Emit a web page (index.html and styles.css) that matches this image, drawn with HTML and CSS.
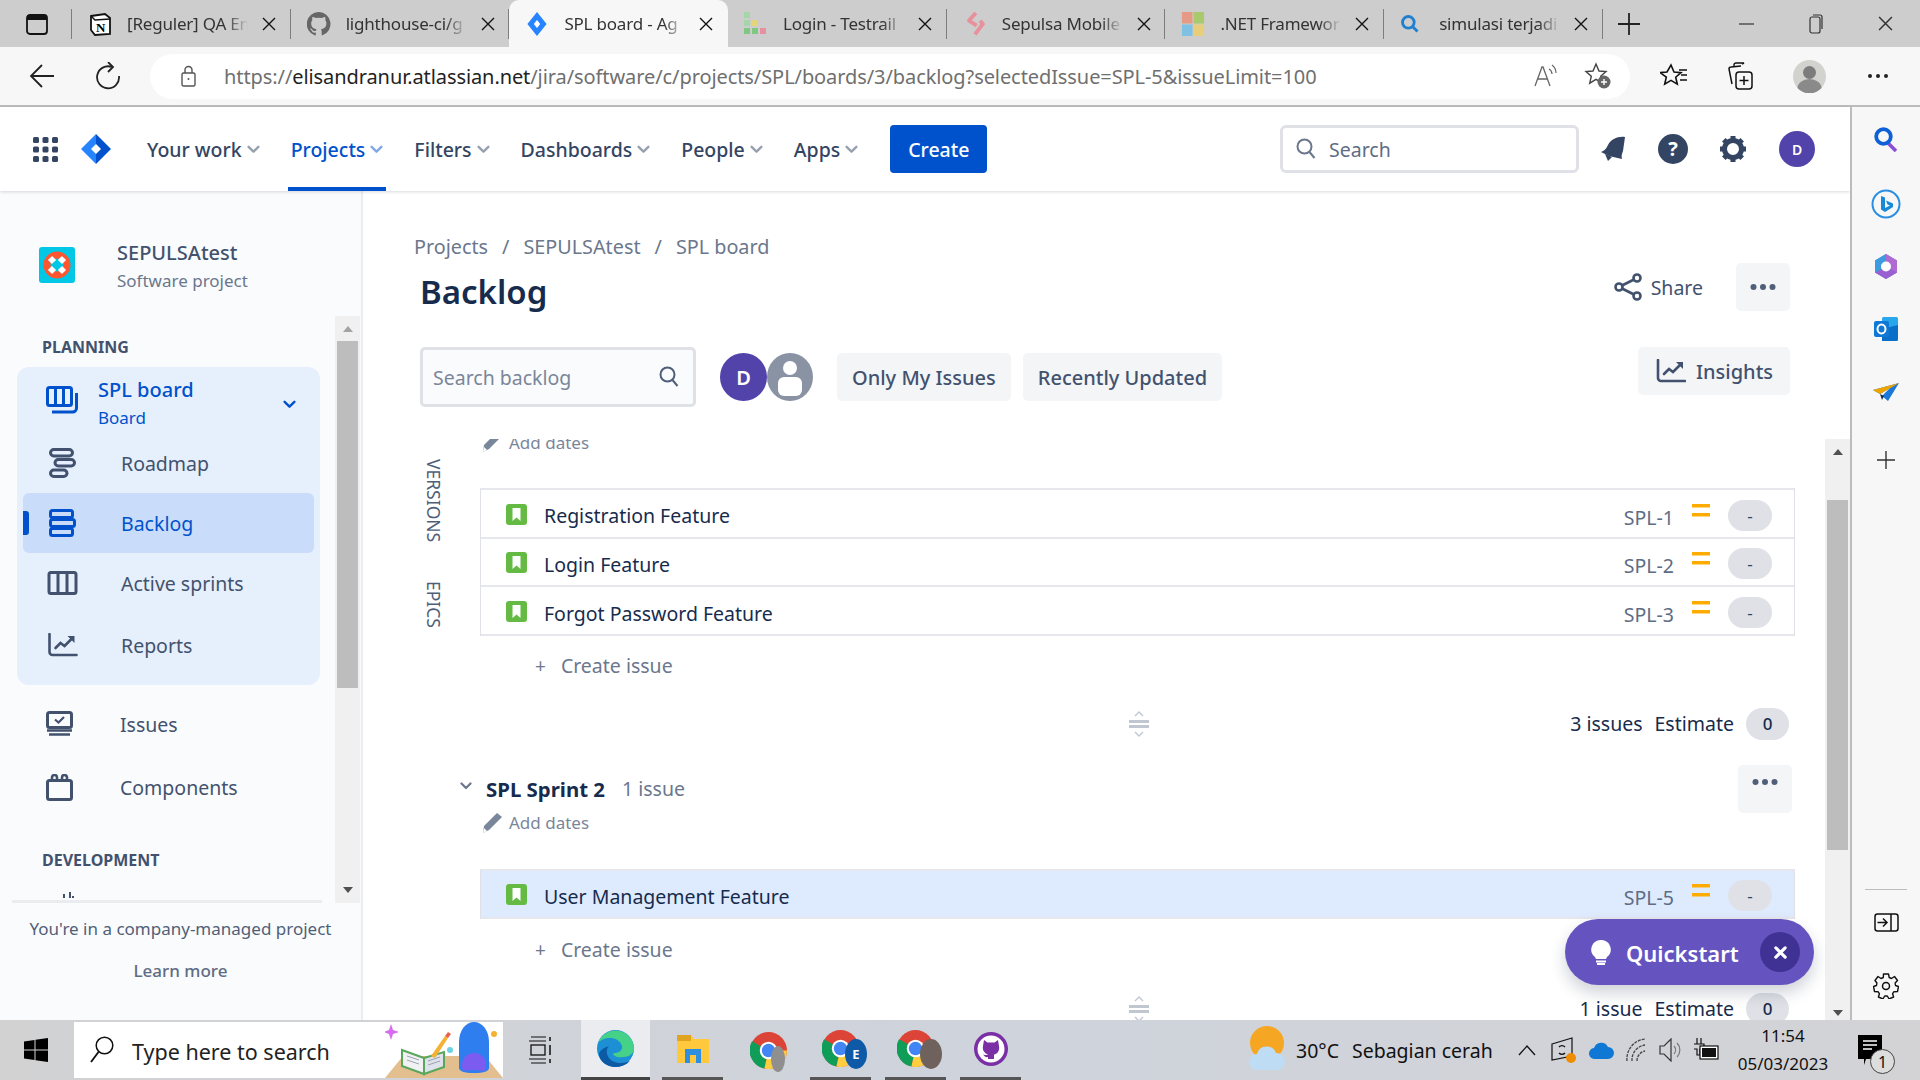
FILE: index.html
```html
<!DOCTYPE html>
<html lang="en">
<head>
    <meta charset="UTF-8">
    <title>Backlog - SPL board</title>
    <link rel="stylesheet" href="styles.css">
</head>
<body>
    <svg class="defs" width="0" height="0">
        <symbol id="x" viewBox="0 0 14 14"><path d="M1 1l12 12M13 1L1 13" stroke="currentColor" stroke-width="1.4" fill="none"/></symbol>
        <symbol id="chev" viewBox="0 0 12 8"><path d="M1.5 1.5L6 6l4.5-4.5" stroke="currentColor" stroke-width="2.2" fill="none" stroke-linecap="round" stroke-linejoin="round"/></symbol>
        <symbol id="story" viewBox="0 0 21 21"><rect width="21" height="21" rx="3" fill="#65ba43"/><path d="M6.5 4h8v13l-4-3.5-4 3.5z" fill="#fff"/></symbol>
        <symbol id="prio" viewBox="0 0 18 13"><path d="M0 0h18v3.4H0zM0 9h18v3.4H0z" fill="#ffab00"/></symbol>
        <symbol id="grip" viewBox="0 0 24 26"><path d="M8 5l4-4 4 4M8 21l4 4 4-4" stroke="#c1c7d0" stroke-width="1.4" fill="none"/><path d="M2 9h20v3H2zM2 14h20v3H2z" fill="#c1c7d0"/></symbol>
        <symbol id="pencil" viewBox="0 0 20 20"><path d="M15 0l5 4L7 17l-6 3 1-7z" fill="#7a869a"/><path d="M1 20l1-5 3 3z" fill="#fff"/></symbol>
        <symbol id="trend" viewBox="0 0 30 24"><path d="M2 1v18a3 3 0 0 0 3 3h24" stroke="currentColor" stroke-width="2.6" fill="none" stroke-linecap="round"/><path d="M8 15l5-5 4 3 7-7" stroke="currentColor" stroke-width="2.6" fill="none" stroke-linecap="round"/><path d="M20 3h7v7z" fill="currentColor"/></symbol>
        <symbol id="dots" viewBox="0 0 26 6"><circle cx="3.5" cy="3" r="3" fill="currentColor"/><circle cx="13" cy="3" r="3" fill="currentColor"/><circle cx="22.5" cy="3" r="3" fill="currentColor"/></symbol>
        <symbol id="chrome" viewBox="0 0 36 36"><circle cx="18" cy="18" r="18" fill="#db4437"/><path d="M18 18L2 9a18 18 0 0 0 12 26.600z" fill="#0f9d58"/><path d="M18 18h18a18 18 0 0 1-22 17.600z" fill="#ffcd40"/><circle cx="18" cy="18" r="8.500" fill="#fff"/><circle cx="18" cy="18" r="6.500" fill="#4285f4"/></symbol>
    </svg>

    <!-- Browser tabs -->
    <div class="tabstrip">
        <div class="tabstrip-start">
            <svg width="22" height="21" viewBox="0 0 22 21"><rect x="1" y="1" width="20" height="19" rx="3" fill="none" stroke="#111" stroke-width="1.800"/><rect x="1" y="1" width="20" height="5" fill="#111"/></svg>
        </div>
        <div class="tab">
            <svg class="favicon" viewBox="0 0 24 24"><path d="M3 4l14-2 5 4v16l-15 1-4-5z" fill="#fff" stroke="#111" stroke-width="1.800"/><path d="M3 4l4 4 15-1" fill="none" stroke="#111" stroke-width="1.500"/><text x="8" y="20" font-size="13" font-family="Liberation Serif" font-weight="700">N</text></svg>
            <span class="tab-title">[Reguler] QA En</span>
            <svg class="tab-x"><use href="#x"/></svg>
        </div>
        <div class="tab">
            <svg class="favicon" viewBox="0 0 24 24"><path d="M12 0a12 12 0 0 0-4 23.400c.6.100.8-.3.800-.6v-2.200c-3.300.7-4-1.500-4-1.500-.5-1.400-1.300-1.800-1.300-1.800-1.100-.7.100-.7.100-.7 1.200.1 1.800 1.200 1.800 1.200 1.100 1.800 2.800 1.300 3.500 1 .1-.8.400-1.300.8-1.600-2.700-.3-5.500-1.300-5.500-5.900 0-1.300.5-2.400 1.200-3.200-.1-.3-.5-1.500.1-3.200 0 0 1-.3 3.300 1.200a11.500 11.500 0 0 1 6 0c2.300-1.500 3.300-1.200 3.300-1.200.6 1.700.2 2.900.1 3.200.8.800 1.200 1.900 1.200 3.200 0 4.600-2.800 5.600-5.500 5.900.4.400.8 1.100.8 2.200v3.300c0 .3.200.7.800.6A12 12 0 0 0 12 0z" fill="#666"/></svg>
            <span class="tab-title">lighthouse-ci/g</span>
            <svg class="tab-x"><use href="#x"/></svg>
        </div>
        <div class="tab tab-active">
            <svg class="favicon" viewBox="0 0 24 30"><path d="M12 0l12 15-12 15L0 15z" fill="#2684ff"/><path d="M12 10l4 5-4 5-4-5z" fill="#fff"/></svg>
            <span class="tab-title">SPL board - Ag</span>
            <svg class="tab-x"><use href="#x"/></svg>
        </div>
        <div class="tab">
            <svg class="favicon" viewBox="0 0 24 24"><path d="M0 0h6v6H0zM0 8h6v6H0z" fill="#a5d6a7"/><path d="M0 16h6v6H0zM8 16h6v6H8z" fill="#81c784"/><path d="M8 8h6v6H8z" fill="#e6d47a"/><path d="M16 16h6v6h-6z" fill="#e88fa0"/></svg>
            <span class="tab-title">Login - Testrail</span>
            <svg class="tab-x"><use href="#x"/></svg>
        </div>
        <div class="tab">
            <svg class="favicon" viewBox="0 0 24 28"><path d="M13 1L5 10l9 6" fill="none" stroke="#e8919d" stroke-width="4.500" stroke-linejoin="round"/><path d="M18 10l3 4-9 12" fill="none" stroke="#e8919d" stroke-width="4.500"/></svg>
            <span class="tab-title">Sepulsa Mobile</span>
            <svg class="tab-x"><use href="#x"/></svg>
        </div>
        <div class="tab">
            <svg class="favicon" viewBox="0 0 24 26"><path d="M0 0h11.500v12.500H0z" fill="#e59a85"/><path d="M12.500 0H24v12.500H12.500z" fill="#a9c96f"/><path d="M0 13.500h11.500V26H0z" fill="#7fc1e3"/><path d="M12.500 13.500H24V26H12.500z" fill="#e8cd7a"/></svg>
            <span class="tab-title">.NET Framewor</span>
            <svg class="tab-x"><use href="#x"/></svg>
        </div>
        <div class="tab">
            <svg class="favicon favicon-small" viewBox="0 0 24 24"><circle cx="10" cy="10" r="7" fill="none" stroke="#1f7fd1" stroke-width="3.400"/><path d="M15 15l6 6" stroke="#1f7fd1" stroke-width="3.400"/></svg>
            <span class="tab-title">simulasi terjadi</span>
            <svg class="tab-x"><use href="#x"/></svg>
        </div>
        <svg class="tab-new" width="22" height="22" viewBox="0 0 22 22"><path d="M11 0v22M0 11h22" stroke="#222" stroke-width="1.800"/></svg>
        <div class="win-controls">
            <svg width="15" height="15" viewBox="0 0 15 15"><path d="M0 8h15" stroke="#333" stroke-width="1.200"/></svg>
            <svg width="14" height="20" viewBox="0 0 14 20"><rect x="1" y="3" width="10" height="16" rx="2" fill="none" stroke="#333" stroke-width="1.200"/><path d="M4 1h7a2 2 0 0 1 2 2v12" fill="none" stroke="#333" stroke-width="1.200"/></svg>
            <svg width="15" height="15"><use href="#x"/></svg>
        </div>
    </div>

    <!-- Browser toolbar -->
    <div class="toolbar">
        <svg class="tb-back" width="25" height="26" viewBox="0 0 25 26"><path d="M25 13H2M13 2L2 13l11 11" fill="none" stroke="#222" stroke-width="1.800"/></svg>
        <svg class="tb-reload" width="25" height="28" viewBox="0 0 25 28"><path d="M17 5a11 11 0 1 0 7 9" fill="none" stroke="#222" stroke-width="1.800"/><path d="M13 0l5 5-5 5" fill="none" stroke="#222" stroke-width="1.800"/></svg>
        <div class="addressbar">
            <svg width="15" height="22" viewBox="0 0 15 22"><rect x="1" y="8" width="13" height="13" rx="1.500" fill="none" stroke="#555" stroke-width="1.400"/><path d="M4 8V5a3.500 3.500 0 0 1 7 0v3" fill="none" stroke="#555" stroke-width="1.400"/><circle cx="7.500" cy="14" r="1" fill="#555"/></svg>
            <div class="url"><span class="url-dim">https://</span>elisandranur.atlassian.net<span class="url-dim">/jira/software/c/projects/SPL/boards/3/backlog?selectedIssue=SPL-5&amp;issueLimit=100</span></div>
            <svg class="addr-read" width="24" height="24" viewBox="0 0 24 24"><path d="M1 22L8 3h1l7 19M4 15h10" fill="none" stroke="#666" stroke-width="1.300"/><path d="M15 5a6 6 0 0 1 3 5M18 1a10 10 0 0 1 4 8" fill="none" stroke="#666" stroke-width="1.200"/></svg>
            <svg class="addr-fav" width="28" height="28" viewBox="0 0 28 28"><path d="M12 2l3 7 7 .6-5.300 4.600 1.600 7-6.300-3.800-6.300 3.800 1.600-7L2 9.600 9 9z" fill="none" stroke="#444" stroke-width="1.400"/><circle cx="20" cy="20" r="6.500" fill="#666"/><path d="M20 17v6M17 20h6" stroke="#fff" stroke-width="1.400"/></svg>
        </div>
        <svg class="tb-favs" width="28" height="26" viewBox="0 0 28 26"><path d="M11 2l3 7 7 .6-5.300 4.600 1.600 7-6.300-3.800-6.300 3.800 1.600-7L0 9.600 7 9z" fill="none" stroke="#111" stroke-width="1.600"/><path d="M19 7h8M21 12h6M20 17h7" stroke="#111" stroke-width="1.500"/></svg>
        <svg class="tb-coll" width="25" height="28" viewBox="0 0 25 28"><path d="M6 4V3a2 2 0 0 1 2-2h8l-2 1" fill="none" stroke="#111" stroke-width="1.400"/><path d="M4 22l-3-15a2 2 0 0 1 2-2l10-1" fill="none" stroke="#111" stroke-width="1.500"/><rect x="8" y="10" width="16" height="17" rx="3" fill="none" stroke="#111" stroke-width="1.500"/><path d="M16 14v9M11.500 18.500h9" stroke="#111" stroke-width="1.500"/></svg>
        <div class="tb-profile">
            <svg width="33" height="33" viewBox="0 0 33 33"><circle cx="16.500" cy="16.500" r="16.500" fill="#d2d2cf"/><circle cx="16.500" cy="12.500" r="6.500" fill="#7c7c7c"/><path d="M4.500 28a12 9 0 0 1 24 0 16 16 0 0 1-24 0z" fill="#8a8a8a"/></svg>
        </div>
        <svg class="tb-more" width="22" height="6" viewBox="0 0 22 6"><circle cx="3" cy="3" r="2" fill="#222"/><circle cx="11" cy="3" r="2" fill="#222"/><circle cx="19" cy="3" r="2" fill="#222"/></svg>
    </div>

    <div class="page">
        <div class="main">
            <!-- Jira top navigation -->
            <header class="topnav">
                <svg class="apps" width="25" height="25" viewBox="0 0 25 25" fill="#344563">
                    <rect width="6" height="6" rx="1.500"/><rect x="9.500" width="6" height="6" rx="1.500"/><rect x="19" width="6" height="6" rx="1.500"/>
                    <rect y="9.500" width="6" height="6" rx="1.500"/><rect x="9.500" y="9.500" width="6" height="6" rx="1.500"/><rect x="19" y="9.500" width="6" height="6" rx="1.500"/>
                    <rect y="19" width="6" height="6" rx="1.500"/><rect x="9.500" y="19" width="6" height="6" rx="1.500"/><rect x="19" y="19" width="6" height="6" rx="1.500"/>
                </svg>
                <svg class="logo" width="30" height="30" viewBox="0 0 30 30"><path d="M15 0l15 15-15 15z" fill="#0052cc"/><path d="M15 0L0 15l15 15z" fill="#2684ff"/><path d="M15 10l5 5-5 5-5-5z" fill="#fff"/></svg>
                <nav class="nav-items">
                    <a class="nav-item">Your work<svg class="nav-chev"><use href="#chev"/></svg></a>
                    <a class="nav-item nav-current">Projects<svg class="nav-chev"><use href="#chev"/></svg></a>
                    <a class="nav-item">Filters<svg class="nav-chev"><use href="#chev"/></svg></a>
                    <a class="nav-item">Dashboards<svg class="nav-chev"><use href="#chev"/></svg></a>
                    <a class="nav-item">People<svg class="nav-chev"><use href="#chev"/></svg></a>
                    <a class="nav-item">Apps<svg class="nav-chev"><use href="#chev"/></svg></a>
                </nav>
                <button class="create-btn">Create</button>
                <div class="nav-search">
                    <svg width="20" height="22" viewBox="0 0 20 22"><circle cx="8.500" cy="8.500" r="7" fill="none" stroke="#6b778c" stroke-width="2"/><path d="M13.500 14l5 6" stroke="#6b778c" stroke-width="2"/></svg>
                    <span>Search</span>
                </div>
                <svg class="nav-bell" width="28" height="26" viewBox="0 0 28 26"><path d="M9 9C12 3 19 0 26 1l-2 14c-1 3-2 5-1 8l-13-3-8-4c3-1 5-3 7-7z" fill="#344563"/><path d="M6 18l3 7 4-4z" fill="#344563"/></svg>
                <svg class="nav-help" width="30" height="30" viewBox="0 0 30 30"><circle cx="15" cy="15" r="15" fill="#344563"/><text x="15" y="22" text-anchor="middle" font-size="20" font-weight="700" fill="#fff" font-family="Noto Sans">?</text></svg>
                <svg class="nav-gear" width="28" height="28" viewBox="0 0 28 28"><circle cx="14" cy="14" r="8.500" fill="none" stroke="#344563" stroke-width="5"/><path d="M14 1v6M14 21v6M1 14h6M21 14h6M4.800 4.800l4.200 4.200M19 19l4.200 4.200M23.200 4.800L19 9M9 19l-4.200 4.200" stroke="#344563" stroke-width="5"/></svg>
                <div class="avatar avatar-nav">D</div>
            </header>

            <div class="body">
                <!-- Project sidebar -->
                <aside class="sidebar">
                    <div class="project">
                        <svg width="36" height="36" viewBox="0 0 36 36"><rect width="36" height="36" rx="3" fill="#00c7e6"/><circle cx="18" cy="18" r="10" fill="none" stroke="#ff5630" stroke-width="7"/><path d="M11 11l4 4M25 11l-4 4M11 25l4-4M25 25l-4-4" stroke="#fff" stroke-width="6"/></svg>
                        <div class="project-text">
                            <div class="project-name">SEPULSAtest</div>
                            <div class="project-type">Software project</div>
                        </div>
                    </div>
                    <div class="side-scroll">
                        <div class="side-nav">
                            <div class="side-heading">PLANNING</div>
                            <div class="panel">
                                <div class="board-row">
                                    <svg width="32" height="28" viewBox="0 0 32 28"><rect x="1.500" y="1.500" width="24" height="18" rx="2" fill="none" stroke="#0052cc" stroke-width="3"/><path d="M9.500 2v17M17.500 2v17" stroke="#0052cc" stroke-width="3"/><path d="M30.500 7v15a4 4 0 0 1-4 4H6" fill="none" stroke="#0052cc" stroke-width="3"/></svg>
                                    <div class="board-text">
                                        <div class="board-name">SPL board</div>
                                        <div class="board-type">Board</div>
                                    </div>
                                    <svg class="board-chev"><use href="#chev"/></svg>
                                </div>
                                <div class="side-item">
                                    <svg width="27" height="30" viewBox="0 0 27 30"><g fill="none" stroke="#42526e" stroke-width="3"><rect x="1.500" y="1.500" width="22" height="6.500" rx="3.250"/><rect x="6" y="11.500" width="19.500" height="6.500" rx="3.250"/><rect x="1.500" y="22" width="16.500" height="6.500" rx="3.250"/></g></svg>
                                    <span>Roadmap</span>
                                </div>
                                <div class="side-item side-current">
                                    <svg width="27" height="28" viewBox="0 0 27 28"><g fill="none" stroke="#0052cc" stroke-width="3"><rect x="1.500" y="1.500" width="22" height="7" rx="2"/><rect x="1.500" y="10.500" width="24" height="7" rx="2"/><rect x="1.500" y="19.500" width="22" height="7" rx="2"/></g></svg>
                                    <span>Backlog</span>
                                </div>
                                <div class="side-item">
                                    <svg width="30" height="24" viewBox="0 0 30 24"><rect x="1.500" y="1.500" width="27" height="21" rx="2" fill="none" stroke="#42526e" stroke-width="3"/><path d="M10.500 2v20M19.500 2v20" stroke="#42526e" stroke-width="3"/></svg>
                                    <span>Active sprints</span>
                                </div>
                                <div class="side-item side-reports">
                                    <svg class="ic-trend"><use href="#trend"/></svg>
                                    <span>Reports</span>
                                </div>
                            </div>
                            <div class="side-item side-plain">
                                <svg width="27" height="27" viewBox="0 0 27 27"><rect x="1.500" y="1.500" width="24" height="15" rx="2" fill="none" stroke="#42526e" stroke-width="3"/><path d="M9 8.500l3.500 3L18 6" fill="none" stroke="#42526e" stroke-width="2.200"/><path d="M1 19.500h25M3 23.500h21" stroke="#42526e" stroke-width="2.600"/></svg>
                                <span>Issues</span>
                            </div>
                            <div class="side-item side-plain">
                                <svg width="27" height="27" viewBox="0 0 27 27"><rect x="1.500" y="6.500" width="24" height="19" rx="2" fill="none" stroke="#42526e" stroke-width="3"/><path d="M6 7V3.500a2 2 0 0 1 5 0V7M16 7V3.500a2 2 0 0 1 5 0V7" fill="none" stroke="#42526e" stroke-width="2.600"/></svg>
                                <span>Components</span>
                            </div>
                            <div class="side-heading side-heading-dev">DEVELOPMENT</div>
                            <svg class="side-clip" width="16" height="6" viewBox="0 0 16 6"><path d="M2 2v4M8 0v6M11 4v2" stroke="#42526e" stroke-width="2"/></svg>
                        </div>
                        <div class="scrollbar scrollbar-side">
                            <i class="arrow-up"></i>
                            <div class="thumb thumb-side"></div>
                            <i class="arrow-down"></i>
                        </div>
                    </div>
                    <div class="side-foot">
                        <div>You're in a company-managed project</div>
                        <div class="learn-more">Learn more</div>
                    </div>
                </aside>

                <!-- Backlog -->
                <main class="content">
                    <div class="crumbs">
                        <span>Projects</span><i>/</i><span>SEPULSAtest</span><i>/</i><span>SPL board</span>
                    </div>
                    <div class="title-row">
                        <h1>Backlog</h1>
                        <div class="share">
                            <svg width="28" height="28" viewBox="0 0 28 28"><g fill="none" stroke="#42526e" stroke-width="2.600"><circle cx="5" cy="14" r="3.500"/><circle cx="23" cy="5" r="3.500"/><circle cx="23" cy="23" r="3.500"/><path d="M8 12.500L20 6.500M8 15.500l12 6"/></g></svg>
                            <span>Share</span>
                        </div>
                        <button class="grey-btn more-btn"><svg class="ic-dots"><use href="#dots"/></svg></button>
                    </div>
                    <div class="filter-row">
                        <div class="backlog-search">
                            <span>Search backlog</span>
                            <svg width="20" height="22" viewBox="0 0 20 22"><circle cx="8.500" cy="8.500" r="7" fill="none" stroke="#505f79" stroke-width="2"/><path d="M13.500 14l5 6" stroke="#505f79" stroke-width="2"/></svg>
                        </div>
                        <div class="avatars">
                            <div class="avatar avatar-d">D</div>
                            <svg width="46" height="48" viewBox="0 0 46 48"><ellipse cx="23" cy="24" rx="23" ry="24" fill="#8993a4"/><circle cx="23" cy="15" r="7" fill="#fff"/><rect x="11" y="24" width="24" height="19" rx="6" fill="#fff"/></svg>
                        </div>
                        <button class="grey-btn filter-btn">Only My Issues</button>
                        <button class="grey-btn filter-btn">Recently Updated</button>
                        <button class="grey-btn insights-btn"><svg class="ic-trend"><use href="#trend"/></svg>Insights</button>
                    </div>
                    <div class="backlog-body">
                        <div class="side-tabs">
                            <span>VERSIONS</span>
                            <span>EPICS</span>
                        </div>
                        <div class="backlog">
                            <section class="sprint sprint-scrolled">
                                <div class="add-dates"><svg class="ic-pencil"><use href="#pencil"/></svg>Add dates</div>
                                <div class="issues">
                                    <div class="issue">
                                        <svg class="ic-story"><use href="#story"/></svg>
                                        <span class="issue-name">Registration Feature</span>
                                        <span class="issue-key">SPL-1</span>
                                        <svg class="ic-prio"><use href="#prio"/></svg>
                                        <span class="pill pill-est">-</span>
                                    </div>
                                    <div class="issue">
                                        <svg class="ic-story"><use href="#story"/></svg>
                                        <span class="issue-name">Login Feature</span>
                                        <span class="issue-key">SPL-2</span>
                                        <svg class="ic-prio"><use href="#prio"/></svg>
                                        <span class="pill pill-est">-</span>
                                    </div>
                                    <div class="issue">
                                        <svg class="ic-story"><use href="#story"/></svg>
                                        <span class="issue-name">Forgot Password Feature</span>
                                        <span class="issue-key">SPL-3</span>
                                        <svg class="ic-prio"><use href="#prio"/></svg>
                                        <span class="pill pill-est">-</span>
                                    </div>
                                </div>
                                <div class="create-issue"><b>+</b>Create issue</div>
                                <div class="sprint-foot">
                                    <svg class="ic-grip"><use href="#grip"/></svg>
                                    <span class="foot-count">3 issues</span>
                                    <span>Estimate</span>
                                    <span class="pill pill-total">0</span>
                                </div>
                            </section>
                            <section class="sprint">
                                <div class="sprint-head">
                                    <svg class="sprint-chev"><use href="#chev"/></svg>
                                    <h2>SPL Sprint 2</h2>
                                    <span class="sprint-count">1 issue</span>
                                    <button class="grey-btn sprint-more"><svg class="ic-dots"><use href="#dots"/></svg></button>
                                </div>
                                <div class="add-dates add-dates-2"><svg class="ic-pencil"><use href="#pencil"/></svg>Add dates</div>
                                <div class="issues">
                                    <div class="issue issue-selected">
                                        <svg class="ic-story"><use href="#story"/></svg>
                                        <span class="issue-name">User Management Feature</span>
                                        <span class="issue-key">SPL-5</span>
                                        <svg class="ic-prio"><use href="#prio"/></svg>
                                        <span class="pill pill-est">-</span>
                                    </div>
                                </div>
                                <div class="create-issue create-issue-2"><b>+</b>Create issue</div>
                                <div class="sprint-foot sprint-foot-2">
                                    <svg class="ic-grip"><use href="#grip"/></svg>
                                    <span class="foot-count">1 issue</span>
                                    <span>Estimate</span>
                                    <span class="pill pill-total">0</span>
                                </div>
                            </section>
                        </div>
                        <div class="scrollbar scrollbar-main">
                            <i class="arrow-up"></i>
                            <div class="thumb thumb-main"></div>
                            <i class="arrow-down"></i>
                        </div>
                    </div>
                </main>
            </div>
        </div>

        <!-- Edge sidebar -->
        <div class="edge-bar">
            <svg class="edge-search" width="24" height="25" viewBox="0 0 24 25"><path d="M14 16l8 8" stroke="#8a4fd3" stroke-width="3.600"/><circle cx="9.500" cy="9.500" r="7.300" fill="none" stroke="#0f5fd7" stroke-width="3.800"/></svg>
            <svg class="edge-bing" width="30" height="30" viewBox="0 0 30 30"><circle cx="15" cy="15" r="13.500" fill="none" stroke="#2a8fe0" stroke-width="2"/><path d="M10 7l4 1.500V19l5-2.500-2.500-1-1.500-4 7 3v3.500L14 23l-4-2.500z" fill="#1689d8"/></svg>
            <svg class="edge-m365" width="26" height="27" viewBox="0 0 26 27"><path d="M13 1l11 6.500v12L13 26 2 19.500v-12z" fill="#6f6fd8"/><path d="M13 1l11 6.500v12L13 14z" fill="#b06bd3"/><path d="M2 19.500L13 14l11 5.500L13 26z" fill="#9a5fd0"/><path d="M2 7.500L13 1v13L2 19.500z" fill="#3e9be0"/><circle cx="13" cy="13.500" r="5" fill="#fff"/></svg>
            <svg class="edge-outlook" width="25" height="24" viewBox="0 0 25 24"><rect x="8" y="0" width="16" height="24" rx="1.500" fill="#28a8ea"/><path d="M8 12l16-4v14a2 2 0 0 1-2 2H8z" fill="#0a6fc9"/><rect y="4" width="15" height="16" rx="2" fill="#0f78d4"/><ellipse cx="7.500" cy="12" rx="4" ry="4.500" fill="none" stroke="#fff" stroke-width="2"/></svg>
            <svg class="edge-send" width="26" height="18" viewBox="0 0 26 18"><path d="M26 0L0 7l7 4 10-6-8 8 6 5z" fill="#1a78d8"/><path d="M26 0L0 7l7 4z" fill="#f0a400"/><path d="M7 11l2 6 2-4z" fill="#1a2a55"/></svg>
            <svg class="edge-plus" width="18" height="18" viewBox="0 0 18 18"><path d="M9 0v18M0 9h18" stroke="#333" stroke-width="1.400"/></svg>
            <div class="edge-line"></div>
            <svg class="edge-collapse" width="25" height="19" viewBox="0 0 25 19"><rect x="1" y="1" width="23" height="17" rx="2.500" fill="none" stroke="#111" stroke-width="1.500"/><path d="M17 1v17M3.500 9.500h9M9 5.500l4 4-4 4" fill="none" stroke="#111" stroke-width="1.500"/></svg>
            <svg class="edge-gear" width="26" height="26" viewBox="0 0 26 26"><circle cx="13" cy="13" r="3.500" fill="none" stroke="#111" stroke-width="1.500"/><path d="M10.500 1h5l.7 3.500 2.300 1 3-2 3 4-2.400 2.500.4 2.500 3 1-1 5-3.500.2-1.400 2 1 3.300-4.500 2-1.800-3h-2.600l-1.800 3-4.500-2 1-3.300-1.400-2-3.500-.2-1-5 3-1 .4-2.500L2 7.500l3-4 3 2 2.300-1z" fill="none" stroke="#111" stroke-width="1.400" stroke-linejoin="round"/></svg>
        </div>

        <div class="quickstart">
            <svg width="20" height="25" viewBox="0 0 20 25"><path d="M10 0a9.500 9.500 0 0 1 6 17l-1 2H5l-1-2A9.500 9.500 0 0 1 10 0z" fill="#fff"/><path d="M5 21.500h10M6 24h8" stroke="#fff" stroke-width="2"/></svg>
            <span>Quickstart</span>
            <div class="quick-close"><svg width="13" height="13" viewBox="0 0 14 14"><path d="M2 2l10 10M12 2L2 12" stroke="#fff" stroke-width="3.400" stroke-linecap="round"/></svg></div>
        </div>
    </div>

    <!-- Windows taskbar -->
    <div class="taskbar">
        <svg class="start" width="24" height="24" viewBox="0 0 24 24" fill="#000"><path d="M0 3.500L10.500 2v9.500H0zM11.500 1.800L24 0v11.500H11.500zM0 12.500h10.500V22L0 20.500zM11.500 12.500H24V24l-12.500-1.800z"/></svg>
        <div class="task-search">
            <svg width="24" height="28" viewBox="0 0 24 28"><circle cx="14.500" cy="9.500" r="8.300" fill="none" stroke="#111" stroke-width="1.500"/><path d="M8.500 16L1 26" stroke="#111" stroke-width="1.800"/></svg>
            <span>Type here to search</span>
            <svg class="search-art" width="118" height="58" viewBox="0 0 118 58"><path d="M0 58l18-22h82l18 22z" fill="#e3bf8f"/><path d="M17 30l22 8v16l-22-8z" fill="#f1f1f4" stroke="#58a75a" stroke-width="2"/><path d="M39 38l20-6v15l-20 7z" fill="#dfe2ec" stroke="#58a75a" stroke-width="2"/><path d="M22 36l12 4M22 40l12 4M43 41l12-4M43 45l12-4" stroke="#9aa3b2" stroke-width="1"/><path d="M46 36l14-20 3 2-13 20z" fill="#f5b132"/><path d="M60 16l3-4 3 2-3 4z" fill="#e8604c"/><path d="M6 4l2 6 6 2-6 2-2 6-2-6-5-2 5-2z" fill="#d66df0"/><circle cx="65" cy="30" r="3" fill="#6bd2e6"/><path d="M74 48V22c0-12 7-20 15-20s15 8 15 20v26c0 3-5 5-15 5s-15-2-15-5z" fill="#2e7ef0"/><path d="M77 46c0-8 5-13 12-13s12 5 12 13-5 4-12 4-12 3-12-4z" fill="#7c5cf0"/><circle cx="109" cy="14" r="3" fill="#f5b132"/></svg>
        </div>
        <svg class="task-view" width="24" height="28" viewBox="0 0 24 28"><path d="M3 1h15M1 5h17M3 27h15M1 23h17" fill="none" stroke="#111" stroke-width="1.200"/><rect x="3" y="9" width="14" height="10" fill="none" stroke="#111" stroke-width="1.300"/><path d="M22 1v4M22 9v10M22 23v4" stroke="#111" stroke-width="1.500"/></svg>
        <div class="task-app task-edge">
            <svg width="37" height="37" viewBox="0 0 37 37"><circle cx="18.500" cy="18.500" r="18.500" fill="#1d8fd4"/><path d="M37 18.500a18.500 18.500 0 0 0-36-5.500c5-6 20-8 24 3 1 4-3 7-7 7-3 0-2 3 2 4 8 1 17-1 17-8.500z" fill="#46d189"/><path d="M2 24c0 7 8 13 16 13 6 0 11-2 15-6-6 3-17 3-21-3-3-4-3-9 0-12C7 18 3 20 2 24z" fill="#0c59a4"/></svg>
        </div>
        <div class="task-app task-open task-files">
            <svg width="32" height="36" viewBox="0 0 32 36"><path d="M0 4h14l3 4h15v24H0z" fill="#ffc83d"/><path d="M0 4h14v6H0z" fill="#e0a422"/><path d="M8 18h16v14h-5v-8h-6v8H8z" fill="#2e8fe0"/></svg>
        </div>
        <div class="task-app task-chrome1">
            <svg width="37" height="37"><use href="#chrome"/></svg>
            <i class="chrome-badge badge-grey"></i>
        </div>
        <div class="task-app task-open task-chrome2">
            <svg width="37" height="37"><use href="#chrome"/></svg>
            <i class="chrome-badge badge-blue">E</i>
        </div>
        <div class="task-app task-open task-chrome3">
            <svg width="37" height="37"><use href="#chrome"/></svg>
            <i class="chrome-badge badge-photo"></i>
        </div>
        <div class="task-app task-open task-gh">
            <svg width="34" height="34" viewBox="0 0 34 34"><circle cx="17" cy="17" r="17" fill="#7b2fa5"/><circle cx="17" cy="17" r="13.500" fill="#fff"/><path d="M10 8l3.500 2.500h7L24 8l1 6c1 5-2 8-5 8.500V27h-6v-2c-2 .5-4-.5-5-3 1 1 3 1.500 5 .5-3-1-6-4-5-8.500z" fill="#7b2fa5"/></svg>
        </div>
        <div class="tray">
            <svg class="tray-weather" width="36" height="48" viewBox="0 0 36 48"><circle cx="18" cy="17" r="17" fill="#f5a623"/><path d="M8 44a8 8 0 0 1 0-16 10 10 0 0 1 19-1 8.500 8.500 0 0 1 1 17z" fill="#bfdcf5"/></svg>
            <div class="weather-text"><span>30°C</span><span>Sebagian cerah</span></div>
            <svg class="tray-caret" width="18" height="11" viewBox="0 0 18 11"><path d="M1 10l8-9 8 9" fill="none" stroke="#111" stroke-width="1.300"/></svg>
            <svg class="tray-ic" width="26" height="28" viewBox="0 0 26 28"><path d="M1 8l20-6v18l-20 4z" fill="none" stroke="#111" stroke-width="1.200"/><path d="M8 11a4 4 0 0 1 6 0M14 17a4 4 0 0 1-6 0" fill="none" stroke="#111" stroke-width="1.300"/><circle cx="20" cy="22" r="5" fill="#f08c00"/></svg>
            <svg class="tray-ic" width="25" height="18" viewBox="0 0 25 18"><path d="M6 18a5.500 5.500 0 0 1-1-11 7.500 7.500 0 0 1 14-1 6 6 0 0 1 0 12z" fill="#0f78d4"/></svg>
            <svg class="tray-ic" width="21" height="24" viewBox="0 0 21 24"><path d="M1 23a20 20 0 0 1 18-22M6 23a15 15 0 0 1 13-16M11 23a10 10 0 0 1 8-10" fill="none" stroke="#444" stroke-width="1.300" stroke-dasharray="3 1"/></svg>
            <svg class="tray-ic" width="22" height="24" viewBox="0 0 22 24"><path d="M1 8h4l7-7v22l-7-7H1z" fill="none" stroke="#333" stroke-width="1.200"/><path d="M15 8a6 6 0 0 1 0 8M18 5a10 10 0 0 1 0 14" fill="none" stroke="#777" stroke-width="1.200"/></svg>
            <svg class="tray-ic" width="26" height="24" viewBox="0 0 26 24"><path d="M4 0v6M8 0v6M1 6h10v5H7v6H4v-6H1" fill="none" stroke="#111" stroke-width="1.200"/><rect x="7" y="8" width="18" height="13" fill="#fff" stroke="#111" stroke-width="1.200"/><rect x="9" y="10" width="14" height="9" fill="#111"/></svg>
            <div class="clock"><div>11:54</div><div>05/03/2023</div></div>
            <div class="notif">
                <svg width="24" height="30" viewBox="0 0 24 30"><path d="M0 0h24v24H8l-2 6v-6H0z" fill="#000"/><path d="M5 6h14M5 10h14M5 14h9" stroke="#fff" stroke-width="1.500"/></svg>
                <span class="notif-badge">1</span>
            </div>
        </div>
    </div>
</body>
</html>
```

FILE: styles.css
```css
* {
    box-sizing: border-box;
}

html, body {
    margin: 0;
    padding: 0;
    height: 1080px;
    overflow: hidden;
}

body {
    font-family: "Noto Sans", "Open Sans", sans-serif;
    font-size: 19.5px;
    color: #172b4d;
    background: #fff;
    display: flex;
    flex-direction: column;
}

button {
    font-family: inherit;
    border: none;
    cursor: pointer;
}

svg {
    flex-shrink: 0;
    display: block;
}

.defs {
    position: absolute;
}

/* Browser tabs */
.tabstrip {
    height: 47px;
    background: #cdcdcd;
    display: flex;
    align-items: center;
    flex-shrink: 0;
}

.tabstrip-start {
    width: 72px;
    height: 30px;
    padding: 5px 0 0 26px;
    border-right: 1px solid #7d7d7d;
}

.tab {
    width: 218.7px;
    height: 30px;
    padding-left: 16px;
    display: flex;
    align-items: center;
    border-right: 1px solid #7d7d7d;
    flex-shrink: 0;
    position: relative;
}

.tab-active {
    height: 47px;
    align-self: flex-start;
    background: #f7f7f7;
    border-right: none;
    border-radius: 10px 10px 0 0;
}

.favicon {
    width: 24px;
    height: 24px;
}

.favicon-small {
    width: 20px;
    height: 20px;
    margin-right: 4px;
}

.tab-title {
    width: 121px;
    margin-left: 15px;
    font-size: 17px;
    letter-spacing: -0.2px;
    white-space: nowrap;
    overflow: hidden;
    color: #333;
    -webkit-mask-image: linear-gradient(to right, #000 82%, transparent);
    mask-image: linear-gradient(to right, #000 82%, transparent);
}

.tab-x {
    width: 14px;
    height: 14px;
    margin-left: 14px;
    color: #111;
}

.tab-new {
    margin-left: 15px;
}

.win-controls {
    margin-left: auto;
    padding-right: 27px;
    display: flex;
    align-items: center;
    gap: 55px;
    color: #333;
}

/* Browser toolbar */
.toolbar {
    height: 60px;
    background: #f7f7f7;
    border-bottom: 2px solid #bcbcbc;
    display: flex;
    align-items: center;
    flex-shrink: 0;
}

.tb-back {
    margin-left: 29px;
}

.tb-reload {
    margin-left: 41px;
}

.addressbar {
    width: 1480px;
    height: 45px;
    margin-left: 30px;
    padding-left: 31px;
    background: #fff;
    border-radius: 23px;
    display: flex;
    align-items: center;
}

.url {
    margin-left: 28px;
    font-size: 20px;
    letter-spacing: -0.085px;
    white-space: nowrap;
    color: #222;
}

.url-dim {
    color: #6f6f6f;
}

.addr-read {
    margin-left: auto;
}

.addr-fav {
    margin: 0 18px 0 26px;
}

.tb-favs {
    margin-left: 30px;
}

.tb-coll {
    margin-left: 40px;
}

.tb-profile {
    margin-left: 40px;
}

.tb-more {
    margin-left: 41px;
}

/* Page frame */
.page {
    height: 913px;
    display: flex;
    position: relative;
    flex-shrink: 0;
}

.main {
    flex: 1;
    min-width: 0;
    display: flex;
    flex-direction: column;
}

/* Top navigation */
.topnav {
    height: 84px;
    padding-left: 33px;
    display: flex;
    align-items: center;
    background: #fff;
    box-shadow: 0 1px 3px rgba(9, 30, 66, 0.16);
    position: relative;
    color: #344563;
    flex-shrink: 0;
}

.logo {
    margin-left: 23px;
}

.nav-items {
    margin-left: 33px;
    display: flex;
    height: 100%;
    gap: 25px;
}

.nav-item {
    padding: 4px 3px 0;
    display: flex;
    align-items: center;
    gap: 5px;
    font-weight: 500;
    border-bottom: 4px solid transparent;
}

.nav-chev {
    width: 13px;
    height: 9px;
    color: #97a0af;
}

.nav-current {
    color: #0052cc;
    border-bottom-color: #0052cc;
}

.nav-current .nav-chev {
    color: #7fa8e6;
}

.create-btn {
    width: 97px;
    height: 48px;
    margin-left: 29px;
    background: #0052cc;
    color: #fff;
    font-size: 19.5px;
    font-weight: 500;
    border-radius: 4px;
}

.nav-search {
    width: 299px;
    height: 48px;
    margin-left: auto;
    padding-left: 13px;
    border: 3px solid #dfe1e6;
    border-radius: 6px;
    display: flex;
    align-items: center;
    gap: 13px;
    color: #5e6c84;
}

.nav-bell {
    margin-left: 20px;
}

.nav-help {
    margin-left: 31px;
}

.nav-gear {
    margin-left: 31px;
}

.avatar {
    display: flex;
    align-items: center;
    justify-content: center;
    border-radius: 50%;
    background: #5243aa;
    color: #fff;
    font-weight: 600;
}

.avatar-nav {
    width: 36px;
    height: 36px;
    margin: 0 35px 0 32px;
    font-size: 14px;
}

.body {
    flex: 1;
    min-height: 0;
    display: flex;
}

/* Project sidebar */
.sidebar {
    width: 363px;
    background: #fafbfc;
    border-right: 2px solid #ebecf0;
    display: flex;
    flex-direction: column;
    color: #42526e;
    flex-shrink: 0;
}

.project {
    height: 125px;
    padding: 56px 0 0 39px;
    display: flex;
    flex-shrink: 0;
}

.project-text {
    margin: -9px 0 0 42px;
}

.project-name {
    font-size: 20px;
    font-weight: 500;
    line-height: 30px;
}

.project-type {
    font-size: 17px;
    line-height: 26px;
    color: #6b778c;
}

.side-scroll {
    height: 587px;
    display: flex;
    flex-shrink: 0;
}

.side-nav {
    width: 335px;
    padding-left: 12px;
    overflow: hidden;
    position: relative;
}

.side-nav::after {
    content: "";
    position: absolute;
    left: 12px;
    right: 13px;
    bottom: 0;
    height: 3px;
    background: #ebecf0;
}

.side-heading {
    height: 36px;
    padding: 3px 0 0 30px;
    margin-top: 13px;
    font-size: 16px;
    line-height: 30px;
    font-weight: 700;
    color: #42526e;
}

.panel {
    width: 303px;
    height: 318px;
    margin: 2px 0 0 5px;
    padding: 0 6px;
    background: #e6effc;
    border-radius: 12px;
}

.board-row {
    height: 66px;
    padding: 0 0 0 23px;
    display: flex;
    align-items: center;
    color: #0052cc;
}

.board-text {
    margin-left: 20px;
    padding-top: 9px;
}

.board-name {
    font-size: 20px;
    font-weight: 500;
    line-height: 27px;
}

.board-type {
    font-size: 17px;
    line-height: 30px;
}

.board-chev {
    width: 13px;
    height: 9px;
    margin-left: auto;
    margin-right: 18px;
    margin-top: 8px;
}

.side-item {
    height: 60px;
    padding-left: 24px;
    display: flex;
    align-items: center;
    position: relative;
}

.side-item svg {
    width: 31px;
}

.side-item span {
    margin-left: 43px;
}

.side-current {
    background: #c9dcfa;
    border-radius: 6px;
    color: #0052cc;
}

.side-current::before {
    content: "";
    position: absolute;
    left: 0;
    top: 18px;
    width: 6px;
    height: 24px;
    background: #0052cc;
    border-radius: 0 3px 3px 0;
}

.side-reports {
    margin-top: 2px;
}

.ic-trend {
    width: 30px;
    height: 24px;
    color: #42526e;
}

.side-plain {
    height: 63px;
    padding-left: 34px;
    margin-top: 8px;
}

.side-plain + .side-plain {
    margin-top: 0;
}

.side-plain svg {
    width: 27px;
}

.side-plain span {
    margin-left: 47px;
}

.side-heading-dev {
    margin-top: 23px;
}

.side-clip {
    margin: 14px 0 0 50px;
}

.side-foot {
    flex: 1;
    text-align: center;
    font-size: 17px;
    padding: 13px 0 0;
    line-height: 26px;
    color: #505f79;
}

.learn-more {
    margin-top: 16px;
    font-weight: 500;
    color: #5e6c84;
}

/* Scrollbars */
.scrollbar {
    width: 25px;
    background: #f0f0f0;
    padding: 0 2px;
    display: flex;
    flex-direction: column;
    align-items: center;
    flex-shrink: 0;
}

.thumb {
    width: 21px;
    background: #bdbdbd;
}

.arrow-up, .arrow-down {
    position: absolute;
    width: 0;
    height: 0;
    border-left: 5.5px solid transparent;
    border-right: 5.5px solid transparent;
}

.arrow-up {
    border-bottom: 6px solid #505050;
}

.arrow-down {
    border-top: 6px solid #505050;
}

.scrollbar-side {
    position: relative;
}

.scrollbar-side .arrow-up {
    top: 10px;
    border-bottom-color: #a3a3a3;
}

.scrollbar-side .arrow-down {
    bottom: 10px;
}

.thumb-side {
    height: 347px;
    margin-top: 25px;
}

.scrollbar-main {
    position: relative;
}

.scrollbar-main .arrow-up {
    top: 10px;
}

.scrollbar-main .arrow-down {
    bottom: 4px;
}

.thumb-main {
    height: 350px;
    margin-top: 61px;
}

/* Content */
.content {
    flex: 1;
    min-width: 0;
    display: flex;
    flex-direction: column;
}

.crumbs {
    height: 24px;
    margin: 43px 0 0 51px;
    display: flex;
    align-items: center;
    font-size: 19.8px;
    color: #6b778c;
}

.crumbs i {
    font-style: normal;
    margin: 0 14px;
}

.title-row {
    height: 48px;
    margin: 5px 60px 0 57px;
    display: flex;
    align-items: center;
}

h1 {
    margin: 0 auto 0 0;
    padding-top: 9px;
    font-size: 33px;
    font-weight: 600;
    color: #172b4d;
}

.share {
    display: flex;
    align-items: center;
    gap: 9px;
    color: #42526e;
    margin-right: 33px;
}

.grey-btn {
    height: 48px;
    background: #f4f5f7;
    border-radius: 5px;
    color: #42526e;
    font-size: 20px;
    font-weight: 500;
    display: flex;
    align-items: center;
    justify-content: center;
}

.more-btn {
    width: 54px;
}

.ic-dots {
    width: 26px;
    height: 6px;
    color: #505f79;
}

.filter-row {
    height: 60px;
    margin: 36px 60px 0 57px;
    display: flex;
    align-items: center;
    flex-shrink: 0;
}

.backlog-search {
    width: 276px;
    height: 60px;
    padding: 0 14px 0 10px;
    border: 3px solid #dfe1e6;
    border-radius: 5px;
    background: #fafbfc;
    display: flex;
    align-items: center;
    justify-content: space-between;
    color: #7a869a;
}

.avatars {
    margin-left: 24px;
    display: flex;
}

.avatar-d {
    width: 47px;
    height: 48px;
    font-size: 20px;
}

.filter-btn {
    padding: 0 15px;
    margin-left: 12px;
    white-space: nowrap;
}

.avatars + .filter-btn {
    margin-left: 24px;
}

.insights-btn {
    width: 152px;
    margin-left: auto;
    gap: 10px;
    padding-left: 7px;
    align-self: flex-start;
}

.backlog-body {
    flex: 1;
    min-height: 0;
    margin-top: 32px;
    display: flex;
}

.side-tabs {
    width: 83px;
    padding: 20px 0 0 61px;
    font-size: 17.5px;
    color: #505f79;
    writing-mode: vertical-rl;
    flex-shrink: 0;
    display: flex;
    flex-direction: row;
    gap: 39px;
}

.backlog {
    flex: 1;
    min-width: 0;
    overflow: hidden;
}

.sprint-scrolled {
    margin-top: -9px;
}

.add-dates {
    height: 24px;
    margin-left: 36px;
    display: flex;
    align-items: center;
    gap: 7px;
    font-size: 17px;
    color: #7a869a;
}

.add-dates-2 {
    margin-top: -2px;
}

.ic-pencil {
    width: 20px;
    height: 20px;
}

.issues {
    margin: 34px 30px 0 34px;
    border-left: 1px solid #dfe1e6;
    border-right: 1px solid #dfe1e6;
    border-top: 2px solid #e6e7ec;
}

.issue {
    height: 48.67px;
    padding: 5px 22px 0 25px;
    display: flex;
    align-items: center;
    border-bottom: 2px solid #e6e7ec;
}

.issue-selected {
    height: 48px;
    background: #deebff;
}

.ic-story {
    width: 21px;
    height: 21px;
    margin-top: -3px;
}

.issue-name {
    margin-left: 17px;
    flex: 1;
}

.issue-key {
    margin-top: 3px;
    color: #5e6c84;
}

.ic-prio {
    width: 18px;
    height: 13px;
    margin: -11px 0 0 18px;
}

.pill {
    display: flex;
    align-items: center;
    justify-content: center;
    background: #dfe1e6;
    border-radius: 16px;
    font-size: 17px;
}

.pill-est {
    width: 44px;
    height: 31px;
    margin: -1px 0 0 18px;
    color: #344563;
}

.create-issue {
    height: 46px;
    margin: 7px 0 0 89px;
    display: flex;
    align-items: center;
    gap: 15px;
    color: #6b778c;
}

.create-issue b {
    font-weight: 400;
    font-size: 19px;
}

.sprint-foot {
    height: 32px;
    margin: 19px 36px 0 0;
    display: flex;
    align-items: center;
    gap: 12px;
    color: #172b4d;
    position: relative;
}

.foot-count {
    margin-left: auto;
}

.pill-total {
    width: 43px;
    height: 32px;
    font-weight: 500;
}

.ic-grip {
    position: absolute;
    left: 681px;
    top: 3px;
    width: 24px;
    height: 26px;
}

.sprint-head {
    height: 48px;
    margin: 25px 33px 0 14px;
    display: flex;
    align-items: center;
}

.sprint-chev {
    width: 12px;
    height: 8px;
    color: #6b778c;
    margin-top: -6px;
}

h2 {
    margin: 0 0 0 14px;
    font-size: 20.4px;
    font-weight: 700;
    color: #172b4d;
}

.sprint-count {
    margin-left: 17px;
    color: #6b778c;
}

.sprint-more {
    width: 54px;
    margin-left: auto;
    padding-bottom: 14px;
}

.create-issue-2 {
    margin-top: 8px;
}

.sprint-foot-2 {
    margin-top: 20px;
}

/* Quickstart */
.quickstart {
    position: absolute;
    left: 1565px;
    top: 812px;
    width: 249px;
    height: 66px;
    padding: 0 14px 0 26px;
    background: #6554c0;
    border-radius: 33px;
    display: flex;
    align-items: center;
    color: #fff;
    font-size: 22px;
    font-weight: 600;
    box-shadow: 0 8px 16px rgba(9, 30, 66, 0.2);
}

.quickstart span {
    margin-left: 15px;
    padding-top: 2px;
}

.quick-close {
    width: 40px;
    height: 40px;
    margin-left: auto;
    background: #403294;
    border-radius: 50%;
    display: flex;
    align-items: center;
    justify-content: center;
}

/* Edge sidebar */
.edge-bar {
    width: 70px;
    background: #f7f7f7;
    border-left: 2px solid #bcbcbc;
    position: relative;
    display: flex;
    flex-direction: column;
    align-items: center;
    flex-shrink: 0;
}

.edge-search {
    margin-top: 20px;
}

.edge-bing {
    margin-top: 37px;
}

.edge-m365 {
    margin-top: 34px;
}

.edge-outlook {
    margin-top: 37px;
}

.edge-send {
    margin-top: 42px;
}

.edge-plus {
    margin-top: 50px;
}

.edge-line {
    width: 42px;
    height: 1px;
    margin-top: 420px;
    background: #bdbdbd;
}

.edge-collapse {
    margin-top: 23px;
}

.edge-gear {
    margin-top: 41px;
}

/* Taskbar */
.taskbar {
    height: 60px;
    flex-shrink: 0;
    background: linear-gradient(to right, #d2d2d3, #ced3dc 50%, #d3d3d6);
    display: flex;
    align-items: center;
    position: relative;
}

.start {
    margin-left: 24px;
}

.task-search {
    width: 429px;
    height: 56px;
    margin-left: 26px;
    padding-left: 16px;
    background: #fff;
    display: flex;
    align-items: center;
    gap: 18px;
    font-size: 21.5px;
    color: #222;
    position: relative;
}

.task-search span {
    padding-top: 2px;
}

.search-art {
    position: absolute;
    right: 0;
    bottom: 0;
}

.task-view {
    margin-left: 25px;
}

.task-app {
    width: 61px;
    height: 60px;
    margin-left: 14px;
    display: flex;
    align-items: center;
    justify-content: center;
    position: relative;
}

.task-edge {
    width: 69px;
    margin-left: 29px;
    background: #ebecef;
    border-bottom: 3px solid #444;
}

.task-open {
    border-bottom: 3px solid #555;
}

.task-files {
    margin-left: 12px;
}

.task-chrome1 {
    margin-left: 15px;
    margin-right: -15px;
}

.task-chrome2 {
    margin-left: 26px;
}

.chrome-badge {
    position: absolute;
    right: 4px;
    bottom: 8px;
    width: 22px;
    height: 30px;
    border-radius: 50%;
    font-style: normal;
    color: #fff;
    font-size: 13px;
    font-weight: 700;
    display: flex;
    align-items: center;
    justify-content: center;
}

.badge-grey {
    width: 14px;
    height: 26px;
    right: 14px;
    background: #8f8f8f;
}

.badge-blue {
    background: #0e5aa7;
}

.badge-photo {
    background: #6f625c;
}

.tray {
    margin-left: auto;
    display: flex;
    align-items: center;
    height: 100%;
    position: relative;
}

.weather-text {
    margin-left: 11px;
    width: 222px;
    display: flex;
    gap: 13px;
    font-size: 19.5px;
    color: #111;
    white-space: nowrap;
}

.tray-caret {
    margin-right: 3px;
}

.tray-ic {
    margin-left: 12px;
}

.clock {
    margin-left: 17px;
    width: 94px;
    text-align: center;
    font-size: 17px;
    line-height: 28px;
    color: #111;
}

.notif {
    margin: 0 38px 0 28px;
    position: relative;
}

.notif-badge {
    position: absolute;
    left: 12px;
    top: 14px;
    width: 25px;
    height: 25px;
    border: 1px solid #444;
    border-radius: 50%;
    background: #ddd;
    display: flex;
    align-items: center;
    justify-content: center;
    font-size: 16px;
    color: #111;
}
```
